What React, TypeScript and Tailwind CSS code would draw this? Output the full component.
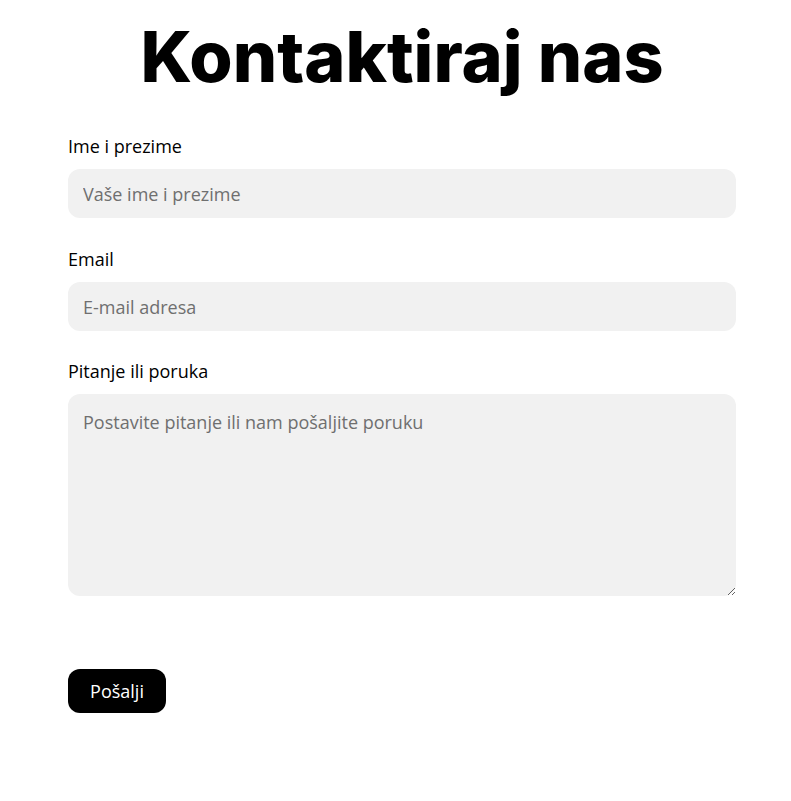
export default function App() {
  const label = "block text-[18px] leading-[24px] text-black mb-[11px]";
  const field =
    "block w-full rounded-[12px] bg-[#f1f1f1] px-[15px] text-[18px] text-black placeholder:text-[#6f6f6f] outline-none";

  return (
    <main className="min-h-screen bg-white font-['Open_Sans',sans-serif]">
      <div className="ml-[68px] w-[668px] pt-[14px]">
        <h1 className="text-center font-['Inter',sans-serif] text-[70px] font-extrabold leading-[86px] tracking-[0px] text-black">
          Kontaktiraj nas
        </h1>

        <form className="mt-[34px] flex flex-col" onSubmit={(e) => e.preventDefault()}>
          <label className={label}>Ime i prezime</label>
          <input className={`${field} h-[49px]`} placeholder="Vaše ime i prezime" />

          <label className={`${label} mt-[29px]`}>Email</label>
          <input className={`${field} h-[49px]`} placeholder="E-mail adresa" />

          <label className={`${label} mt-[28px]`}>Pitanje ili poruka</label>
          <textarea
            className={`${field} h-[202px] py-[15px]`}
            placeholder="Postavite pitanje ili nam pošaljite poruku"
          />

          <div className="mt-[73px]">
            <button
              type="submit"
              className="h-[44px] w-[98px] rounded-[12px] bg-black text-[18px] text-white"
            >
              Pošalji
            </button>
          </div>
        </form>
      </div>
    </main>
  );
}
